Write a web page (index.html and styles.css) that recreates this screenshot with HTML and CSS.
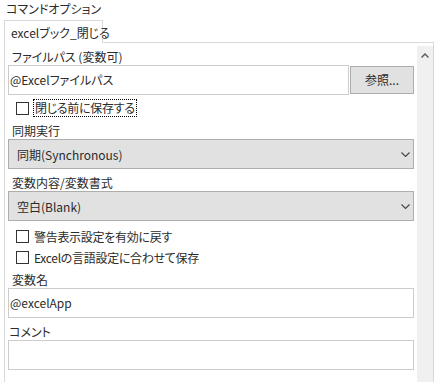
FILE: index.html
```html
<!DOCTYPE html>
<html lang="ja">
<head>
<meta charset="utf-8">
<link rel="stylesheet" href="styles.css">
</head>
<body>
<div class="page">
  <div class="title">コマンドオプション</div>
  <div class="tabs">
    <div class="tab">excelブック_閉じる</div>
  </div>
  <div class="panel">
    <div class="content">
      <div class="label first">ファイルパス (変数可)</div>
      <div class="file-row">
        <div class="input">@Excelファイルパス</div>
        <div class="button">参照...</div>
      </div>
      <div class="check first-check">
        <span class="box"></span>
        <span class="focus">閉じる前に保存する</span>
      </div>
      <div class="label">同期実行</div>
      <div class="select">
        <span>同期(Synchronous)</span>
        <svg class="chev" width="9" height="5" viewBox="0 0 9 5"><polyline points="0.5,0.5 4.5,4.5 8.5,0.5" fill="none" stroke="#444" stroke-width="1.1"/></svg>
      </div>
      <div class="label">変数内容/変数書式</div>
      <div class="select">
        <span>空白(Blank)</span>
        <svg class="chev" width="9" height="5" viewBox="0 0 9 5"><polyline points="0.5,0.5 4.5,4.5 8.5,0.5" fill="none" stroke="#444" stroke-width="1.1"/></svg>
      </div>
      <div class="check c2">
        <span class="box"></span>
        <span class="text">警告表示設定を有効に戻す</span>
      </div>
      <div class="check c3">
        <span class="box"></span>
        <span class="text">Excelの言語設定に合わせて保存</span>
      </div>
      <div class="label">変数名</div>
      <div class="input full">@excelApp</div>
      <div class="label comment">コメント</div>
      <div class="input full"></div>
    </div>
    <div class="scrollbar">
      <svg class="up" width="8" height="5" viewBox="0 0 8 5"><polyline points="0.5,4.5 4,1 7.5,4.5" fill="none" stroke="#606060" stroke-width="1.5"/></svg>
    </div>
  </div>
</div>
</body>
</html>
```
FILE: styles.css
```css
* { box-sizing: border-box; }
html, body { margin: 0; padding: 0; background: #fff; }
body {
  font-family: "Noto Sans CJK JP", "Noto Sans", sans-serif;
  font-feature-settings: "palt";
  font-size: 12px;
  color: #2b2b2b;
  width: 440px;
  height: 382px;
  overflow: hidden;
  white-space: nowrap;
}
.page {
  display: flex;
  flex-direction: column;
  height: 382px;
}
.title {
  height: 20px;
  line-height: 17px;
  padding-left: 6px;
}
.tabs {
  display: flex;
  padding-left: 4px;
  position: relative;
  z-index: 1;
}
.tab {
  width: 99px;
  height: 23px;
  border: 1px solid #d9d9d9;
  border-bottom: none;
  background: #fff;
  line-height: 23px;
  padding-left: 6px;
  margin-bottom: -1px;
}
.panel {
  flex: 1;
  margin-left: 4px;
  width: 430px;
  border: 1px solid #d9d9d9;
  border-bottom: none;
  display: flex;
}
.content {
  flex: 1;
  padding: 0 3px;
  display: flex;
  flex-direction: column;
}
.scrollbar {
  width: 16px;
  margin-top: 3px;
  background: #f0f0f0;
  display: flex;
  justify-content: center;
  padding-top: 7px;
}
.up { display: block; }
.label {
  height: 17px;
  line-height: 17px;
  padding-left: 4px;
  margin-top: 5px;
}
.label.first { margin-top: 5px; }
.label.comment { padding-left: 1px; }
.file-row {
  display: flex;
  height: 30px;
}
.input {
  height: 30px;
  border: 1px solid #cccccc;
  background: #fff;
  line-height: 28px;
  padding-left: 1px;
  flex: 1;
}
.input.full { flex: none; }
.button {
  width: 64px;
  height: 28px;
  margin: 1px 0 0 1px;
  background: #e1e1e1;
  border: 1px solid #adadad;
  text-align: center;
  line-height: 26px;
}
.check {
  display: flex;
  align-items: center;
  height: 18px;
  padding-left: 8px;
}
.first-check { margin-top: 4px; }
.c2 { margin-top: 6px; }
.c3 { margin-top: 3px; }
.box {
  width: 13px;
  height: 13px;
  border: 1px solid #333;
  background: #fff;
  flex: none;
}
.focus {
  margin-left: 4px;
  height: 18px;
  line-height: 16px;
  padding: 0 1px;
  border: 1px dotted #000;
  letter-spacing: -0.3px;
}
.text {
  margin-left: 5px;
  letter-spacing: -0.3px;
}
.select {
  height: 30px;
  border: 1px solid #adadad;
  background: #e1e1e1;
  display: flex;
  align-items: center;
  justify-content: space-between;
  padding: 0 3px 0 8px;
}
.chev { display: block; }
```
